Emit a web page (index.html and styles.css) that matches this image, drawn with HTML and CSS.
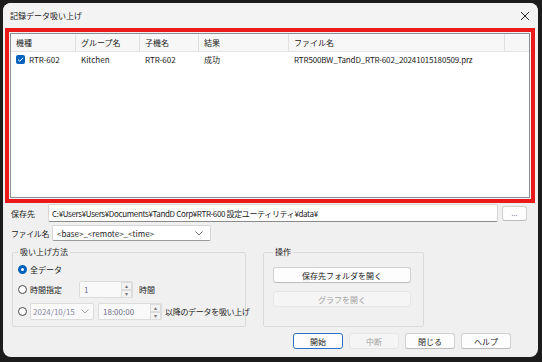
FILE: index.html
```html
<!DOCTYPE html>
<html lang="ja">
<head>
  <meta charset="UTF-8" />
  <title>記録データ吸い上げ</title>
  <link rel="stylesheet" href="styles.css">
</head>
<body>
  <div class="window">
    <div class="titlebar">
      <span class="title">記録データ吸い上げ</span>
      <svg class="close" width="10" height="10" viewBox="0 0 10 10"><path d="M1 1 L9 9 M9 1 L1 9" stroke="#222" stroke-width="1"/></svg>
    </div>

    <div class="highlight">
      <div class="listview">
        <div class="lv-row lv-head">
          <div class="c c1">機種</div>
          <div class="c c2">グループ名</div>
          <div class="c c3">子機名</div>
          <div class="c c4">結果</div>
          <div class="c c5">ファイル名</div>
          <div class="c c6"></div>
        </div>
        <div class="lv-row">
          <div class="c c1"><span class="check"><svg width="9" height="9" viewBox="0 0 9 9"><path d="M2 4.6 L3.8 6.3 L7 2.8" fill="none" stroke="#fff" stroke-width="1"/></svg></span>RTR-602</div>
          <div class="c c2">Kitchen</div>
          <div class="c c3">RTR-602</div>
          <div class="c c4">成功</div>
          <div class="c c5 fname">RTR500BW_TandD_RTR-602_20241015180509.prz</div>
          <div class="c c6"></div>
        </div>
      </div>
    </div>

    <div class="form-row path-row">
      <span class="label">保存先</span>
      <div class="textbox path">C:¥Users¥Users¥Documents¥TandD Corp¥RTR-600 設定ユーティリティ¥data¥</div>
      <button class="btn browse">...</button>
    </div>

    <div class="form-row name-row">
      <span class="label">ファイル名</span>
      <div class="combo">
        <span>&lt;base&gt;_&lt;remote&gt;_&lt;time&gt;</span>
        <svg width="8" height="5" viewBox="0 0 8 5"><path d="M0.5 0.5 L4 4 L7.5 0.5" fill="none" stroke="#666" stroke-width="0.9"/></svg>
      </div>
    </div>

    <div class="groups">
      <fieldset class="group method">
        <legend>吸い上げ方法</legend>
        <div class="opt">
          <span class="radio on"></span><span>全データ</span>
        </div>
        <div class="opt">
          <span class="radio"></span><span class="opt-text">時間指定</span>
          <div class="spin hours">
            <span class="val">1</span>
            <span class="arrows"><i>▴</i><i>▾</i></span>
          </div>
          <span class="unit">時間</span>
        </div>
        <div class="opt">
          <span class="radio"></span>
          <div class="combo date">
            <span>2024/10/15</span>
            <svg width="8" height="5" viewBox="0 0 8 5"><path d="M0.5 0.5 L4 4 L7.5 0.5" fill="none" stroke="#999" stroke-width="0.9"/></svg>
          </div>
          <div class="spin time">
            <span class="val">18:00:00</span>
            <span class="arrows"><i>▴</i><i>▾</i></span>
          </div>
          <span class="after">以降のデータを吸い上げ</span>
        </div>
      </fieldset>

      <fieldset class="group ops">
        <legend>操作</legend>
        <button class="btn wide">保存先フォルダを開く</button>
        <button class="btn wide" disabled>グラフを開く</button>
      </fieldset>
    </div>

    <div class="footer">
      <button class="btn default">開始</button>
      <button class="btn" disabled>中断</button>
      <button class="btn">閉じる</button>
      <button class="btn">ヘルプ</button>
    </div>
  </div>
</body>
</html>
```

FILE: styles.css
```css
body {
  margin: 0;
  padding: 3px;
  background-color: #1c1c1c;
  font-family: "Noto Sans CJK JP", "Noto Sans", sans-serif;
  font-size: 8px;
  color: #1a1a1a;
}

.window {
  width: 535px;
  height: 354px;
  box-sizing: border-box;
  background: #f0f0f0;
  border-radius: 8px;
  overflow: hidden;
}

.titlebar {
  height: 25px;
  display: flex;
  align-items: center;
  justify-content: space-between;
  padding: 0 7px 0 7px;
  background: #f3f3f3;
}

.close {
  margin-right: 1px;
}

.highlight {
  margin: 0 3px 0 2px;
  height: 175px;
  box-sizing: border-box;
  border: 4px solid #ea1a1a;
  padding: 1px;
}

.listview {
  height: 100%;
  box-sizing: border-box;
  border: 1px solid #8c8f96;
  background: #fff;
}

.lv-row {
  display: flex;
  height: 15px;
  align-items: center;
}

.lv-head {
  height: 17px;
  background: #f7f7f7;
  border-bottom: 1px solid #e3e3e3;
  align-items: stretch;
}

.lv-head .c {
  border-right: 1px solid #e0e0e0;
  display: flex;
  align-items: center;
}

.c {
  box-sizing: border-box;
  padding-left: 5px;
  white-space: nowrap;
  display: flex;
  align-items: center;
}

.c1 { width: 65px; }
.c2 { width: 64px; }
.c3 { width: 59px; }
.c4 { width: 90px; }
.c5 { width: 216px; }
.c6 { flex: 1; }

.lv-head .c6 { border-right: none; }

.fname {
  letter-spacing: -0.15px;
}

.check {
  width: 9px;
  height: 9px;
  background: #0062bd;
  border-radius: 2px;
  margin-right: 4px;
  display: inline-flex;
}

.form-row {
  display: flex;
  align-items: center;
  padding-left: 8px;
}

.label {
  white-space: nowrap;
  flex: none;
}

.path-row {
  margin-top: 1px;
  height: 18px;
}

.path-row .label {
  width: 37px;
}

.textbox {
  box-sizing: border-box;
  width: 450px;
  height: 18px;
  background: #fff;
  border: 1px solid #d6d6d6;
  border-bottom-color: #8a8a8a;
  border-radius: 2px;
  padding-left: 3px;
  display: flex;
  align-items: center;
  white-space: nowrap;
}

.path {
  letter-spacing: -0.35px;
}

.btn {
  font-family: inherit;
  font-size: 8px;
  color: #1a1a1a;
  background: #fdfdfd;
  border: 1px solid #d0d0d0;
  border-bottom-color: #bcbcbc;
  border-radius: 3px;
  padding: 0;
  height: 16px;
  width: 50px;
}

.btn:disabled {
  background: #f5f5f5;
  border-color: #e6e6e6;
  color: #a2a2a2;
}

.browse {
  width: 25px;
  height: 15px;
  margin-left: 4px;
  color: #6d6d8c;
  font-size: 7px;
  line-height: 10px;
}

.name-row {
  margin-top: 3px;
  height: 16px;
}

.name-row .label {
  letter-spacing: -0.4px;
  margin-right: 3px;
}

.combo {
  box-sizing: border-box;
  width: 159px;
  height: 16px;
  background: #fff;
  border: 1px solid #d6d6d6;
  border-bottom-color: #9a9a9a;
  border-radius: 2px;
  padding: 0 7px 0 4px;
  display: flex;
  align-items: center;
  justify-content: space-between;
  flex: none;
}

.groups {
  display: flex;
  gap: 17px;
  margin: 5px 0 0 9px;
}

.group {
  margin: 0;
  min-width: 0;
  height: 81px;
  box-sizing: border-box;
  border: 1px solid #dadada;
  border-radius: 2px;
  padding: 4px 0 0 5px;
}

.group legend {
  padding: 0 2px;
  margin-left: 0;
  line-height: 12px;
}

.method {
  width: 234px;
}

.ops {
  width: 161px;
  padding-left: 9px;
  display: flex;
  flex-direction: column;
}

.opt {
  display: flex;
  align-items: center;
  height: 14px;
  white-space: nowrap;
}

.opt + .opt {
  height: 17px;
  margin-top: 5px;
}

.radio {
  width: 9px;
  height: 9px;
  box-sizing: border-box;
  border: 1px solid #4a4a4a;
  border-radius: 50%;
  background: #fff;
  margin-right: 3px;
  flex: none;
}

.radio.on {
  border: 3px solid #0062bd;
}

.opt-text {
  width: 49px;
}

.spin {
  box-sizing: border-box;
  height: 17px;
  border: 1px solid #dcdcdc;
  border-radius: 2px;
  background: #f9f9f9;
  display: flex;
  align-items: center;
  justify-content: space-between;
  color: #6b6b8a;
  flex: none;
}

.spin .val {
  padding-left: 4px;
}

.arrows {
  display: flex;
  flex-direction: column;
  width: 11px;
  height: 15px;
}

.arrows i {
  font-style: normal;
  font-size: 6px;
  line-height: 6px;
  text-align: center;
  color: #777;
  background: #f3f3f3;
  border: 1px solid #dcdcdc;
  flex: 1;
}

.hours {
  width: 54px;
}

.unit {
  margin-left: 6px;
}

.date {
  width: 64px;
  height: 17px;
  color: #8a8aa0;
  background: #f9f9f9;
  border-color: #dcdcdc;
  padding: 0 4px 0 2px;
}

.time {
  width: 64px;
  margin-left: 4px;
}

.after {
  margin-left: 3px;
  letter-spacing: -0.3px;
}

.wide {
  width: 138px;
  height: 16px;
  margin-top: 5px;
}

.wide + .wide {
  margin-top: 8px;
}

.footer {
  display: flex;
  justify-content: flex-end;
  gap: 6px;
  margin-top: 6px;
  padding-right: 27px;
}

.default {
  border: 1px solid #2a72c8;
}
```
